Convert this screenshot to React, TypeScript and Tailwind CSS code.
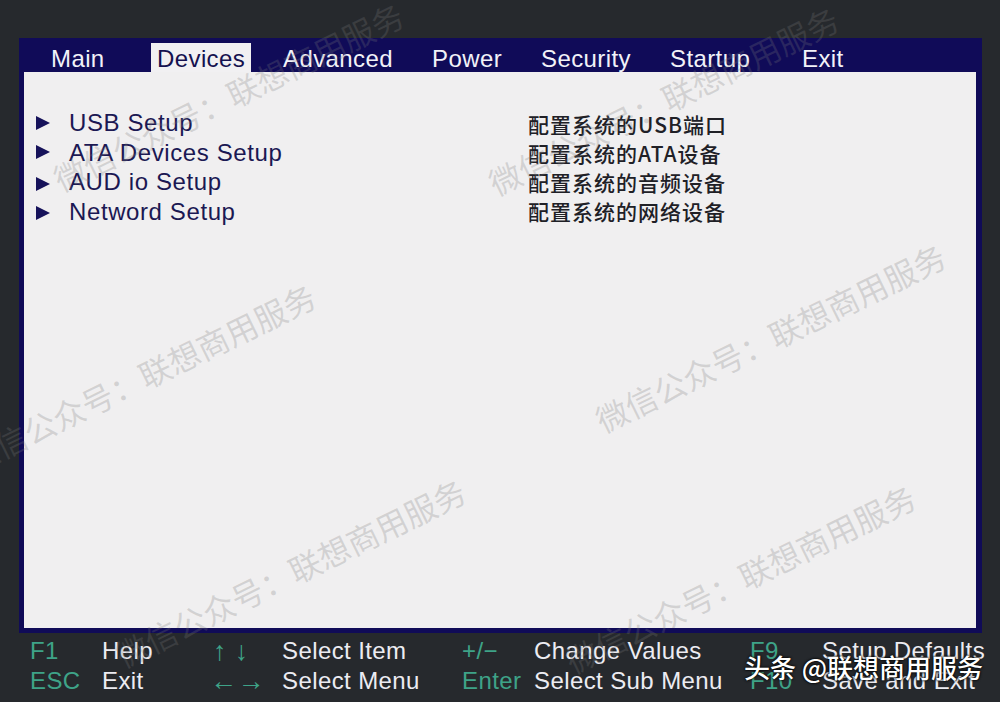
const tabs = [
  { label: 'Main', w: 'w-[106px]' },
  { label: 'Devices', w: 'w-[126px]', active: true },
  { label: 'Advanced', w: 'w-[149px]' },
  { label: 'Power', w: 'w-[109px]' },
  { label: 'Security', w: 'w-[129px]' },
  { label: 'Startup', w: 'w-[132px]' },
  { label: 'Exit', w: 'w-[80px]' },
];

const items = [
  { label: 'USB Setup', desc: '配置系统的USB端口' },
  { label: 'ATA Devices Setup', desc: '配置系统的ATA设备' },
  { label: 'AUD io Setup', desc: '配置系统的音频设备' },
  { label: 'Netword Setup', desc: '配置系统的网络设备' },
];

const keyRows = [
  ['F1', 'Help', '↑ ↓', 'Select Item', '+/−', 'Change Values', 'F9', 'Setup Defaults'],
  ['ESC', 'Exit', '←→', 'Select Menu', 'Enter', 'Select Sub Menu', 'F10', 'Save and Exit'],
];

const colWidths = ['w-[72px]', 'w-[108px]', 'w-[72px]', 'w-[180px]', 'w-[72px]', 'w-[216px]', 'w-[72px]', 'w-[170px]'];

// watermark centres, picked off the screenshot
const marks = [
  'left-[228px] top-[96px]',
  'left-[663px] top-[100px]',
  'left-[140px] top-[377px]',
  'left-[770px] top-[337px]',
  'left-[290px] top-[572px]',
  'left-[740px] top-[578px]',
];

function Arrow() {
  return (
    <svg width="14" height="14" viewBox="0 0 14 14" className="shrink-0">
      <polygon points="0,0 14,7 0,14" fill="#16125a" />
    </svg>
  );
}

export default function App() {
  return (
    <div className="relative w-[1000px] h-[702px] overflow-hidden bg-[#26292d] font-['Liberation_Sans',Arial,sans-serif]">
      <div className="pt-[38px] pl-[19px]">
        <div className="w-[963px] h-[595px] bg-[#100b58] flex flex-col">
          {/* tab bar */}
          <div className="h-[34px] flex items-end pl-[26px]">
            {tabs.map((t) => (
              <div key={t.label} className={t.w}>
                <span
                  className={`block w-fit h-[29px] pt-[5px] px-[6px] text-[24px] leading-[22px] tracking-[0.4px] ${
                    t.active ? 'bg-[#f1f0f2] text-[#15114f]' : 'text-[#f2f2f8]'
                  }`}
                >
                  {t.label}
                </span>
              </div>
            ))}
          </div>

          {/* content panel */}
          <div className="ml-[5px] mr-[6px] mb-[5px] flex-1 bg-[#f0eff0] flex">
            <div className="w-[504px] pl-[12px] pt-[36px]">
              {items.map((it, i) => (
                <div key={it.label} className="flex items-center h-[29.5px]">
                  <div className={`w-[33px] ${i > 1 ? 'pt-[4px]' : ''}`}>
                    <Arrow />
                  </div>
                  <span className="text-[24px] leading-[29.5px] tracking-[0.6px] text-[#1b1853]">{it.label}</span>
                </div>
              ))}
            </div>
            <div className="pt-[38px] font-['Noto_Sans_CJK_SC',sans-serif] font-medium text-[21px] leading-[29px] tracking-[1px] text-[#202026]">
              {items.map((it) => (
                <div key={it.desc}>{it.desc}</div>
              ))}
            </div>
          </div>
        </div>
      </div>

      {/* key help */}
      <div className="pl-[30px] pt-[3px]">
        {keyRows.map((row, r) => (
          <div key={r} className="flex h-[30px] text-[24px] leading-[30px] tracking-[0.4px]">
            {row.map((cell, c) => (
              <div
                key={c}
                className={`${colWidths[c]} shrink-0 whitespace-nowrap ${
                  c % 2 === 0 ? 'text-[#3ea388]' : 'text-[#ececf2]'
                } ${c === 2 ? 'text-[27px]' : ''} ${c === 2 && r === 0 ? 'pl-[3px]' : ''}`}
              >
                {cell}
              </div>
            ))}
          </div>
        ))}
      </div>

      {/* watermarks */}
      {marks.map((pos) => (
        <div
          key={pos}
          className={`absolute ${pos} -translate-x-1/2 -translate-y-1/2 -rotate-[26deg] whitespace-nowrap pointer-events-none font-['Noto_Sans_CJK_SC',sans-serif] text-[32px] text-[#7a7a7a]/25`}
        >
          微信公众号：联想商用服务
        </div>
      ))}

      <div className="absolute left-[744px] top-[651px] whitespace-nowrap font-['Noto_Sans_CJK_SC',sans-serif] font-medium text-[26px] leading-[32px] text-white [text-shadow:0_0_2px_#000,0_0_3px_#000]">
        头条 @联想商用服务
      </div>
    </div>
  );
}
